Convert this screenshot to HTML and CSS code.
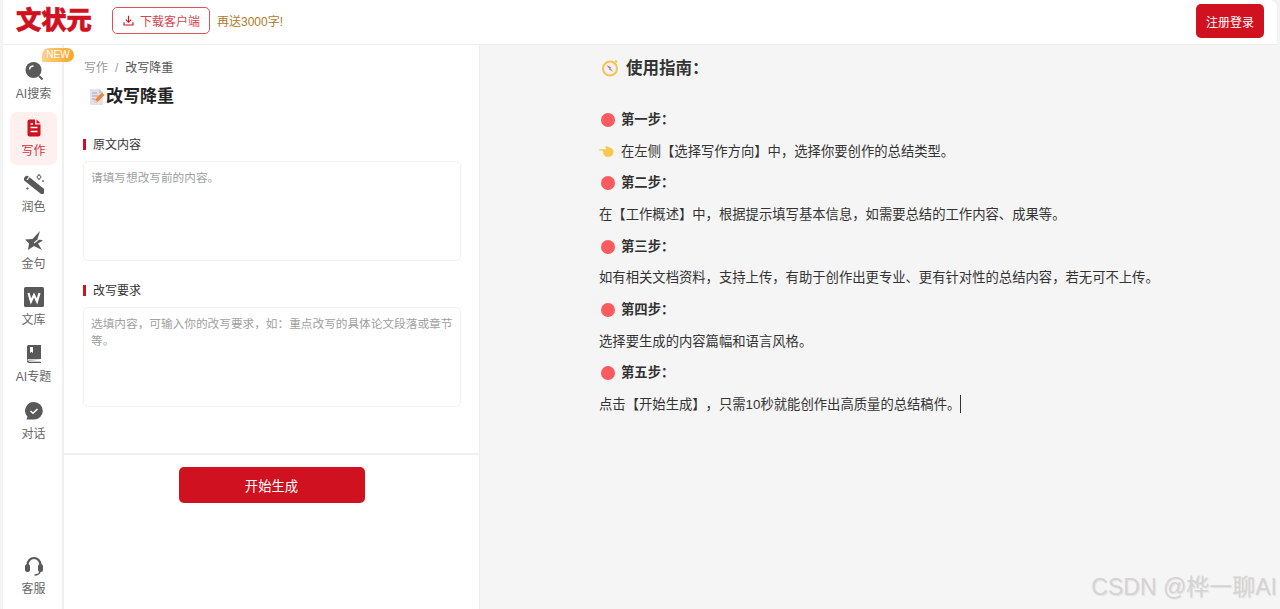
FILE: index.html
```html
<!DOCTYPE html>
<html lang="zh">
<head>
<meta charset="utf-8">
<title>文状元</title>
<link rel="stylesheet" href="styles.css">
</head>
<body>
<div class="app">
  <header class="topbar">
    <div class="logo">文状元</div>
    <button class="download">
      <svg class="dl-icon" viewBox="0 0 16 16"><path d="M8 2v8M4.800 7 8 10.200 11.200 7M2.500 10v3.500h11V10" fill="none" stroke="#d0111f" stroke-width="1.400"/></svg>
      <span>下载客户端</span>
    </button>
    <span class="promo">再送3000字!</span>
    <button class="login">注册登录</button>
  </header>
  <div class="main">
    <nav class="sidebar">
      <div class="nav-list">
        <a class="nav-item">
          <span class="badge">NEW</span>
          <svg class="nav-icon" viewBox="0 0 20 20"><circle cx="9.500" cy="9" r="8" fill="#595959"/><path d="M5.500 8.500a4 4 0 0 1 4-3.500" fill="none" stroke="#fff" stroke-width="1.500"/><path d="M15 15l3.500 3.500" stroke="#595959" stroke-width="2"/></svg>
          <span>AI搜索</span>
        </a>
        <a class="nav-item active">
          <svg class="nav-icon" viewBox="0 0 20 20"><path d="M3.500 3.500a2 2 0 0 1 2-2H11v5h5.500v10a2 2 0 0 1-2 2h-9a2 2 0 0 1-2-2z" fill="#d0111f"/><path d="M12.500 1.500l4 3.800h-4z" fill="#d0111f"/><path d="M6.500 9.500h7M6.500 13.500h7M6.500 6h2.500" stroke="#fff" stroke-width="1.600"/></svg>
          <span>写作</span>
        </a>
        <a class="nav-item">
          <svg class="nav-icon" viewBox="0 0 20 20"><path d="M3 5 18 17" stroke="#595959" stroke-width="6" stroke-linecap="round"/><path d="M5.500 2.500 3 6" stroke="#fff" stroke-width="1.200"/><path d="M15 .5l2 2.500-2 2.500-2-2.500z" fill="none" stroke="#777" stroke-width="1.200"/><path d="M3.500 13l1.500 1.500-1.500 1.500L2 14.500z" fill="#777"/><circle cx="19" cy="7" r="1" fill="#777"/></svg>
          <span>润色</span>
        </a>
        <a class="nav-item">
          <svg class="nav-icon" viewBox="0 0 20 20"><path d="M16 0 13.500 8 19 9.500 14 12.500 18 19 10 15 4 19 5 12.500 1 8.500 8.500 8z" fill="#595959"/><path d="M17.500 6 10 12" stroke="#fff" stroke-width="1.100"/></svg>
          <span>金句</span>
        </a>
        <a class="nav-item">
          <svg class="nav-icon" viewBox="0 0 20 20"><rect width="20" height="20" rx="1.500" fill="#595959"/><path d="M4.500 6 7 14.500 10 8l3 6.500L15.500 6" fill="none" stroke="#fff" stroke-width="2.200"/></svg>
          <span>文库</span>
        </a>
        <a class="nav-item">
          <svg class="nav-icon" viewBox="0 0 20 20"><path d="M3 2.500A1.500 1.500 0 0 1 4.500 1H17v14H5a2 2 0 0 0-2 1.500z" fill="#595959"/><path d="M3 16.500A2 2 0 0 0 5 19h12v-1.200H5.500a1 1 0 0 1 0-2H17" fill="#595959"/><path d="M6 3h3v6L7.500 7.700 6 9z" fill="#fff"/></svg>
          <span>AI专题</span>
        </a>
        <a class="nav-item">
          <svg class="nav-icon" viewBox="0 0 20 20"><path d="M10 1a8.800 8.800 0 0 1 0 17.600H2.500l1-2.800A8.800 8.800 0 0 1 10 1z" fill="#595959"/><path d="M6.500 10l2.500 2.200L13.500 8" fill="none" stroke="#fff" stroke-width="1.500"/></svg>
          <span>对话</span>
        </a>
      </div>
      <a class="nav-item service">
        <svg class="nav-icon" viewBox="0 0 20 20"><path d="M3.500 9a6.500 7 0 0 1 13 0" fill="none" stroke="#595959" stroke-width="2.200"/><rect x="1" y="8" width="5" height="8" rx="2.500" fill="#595959"/><rect x="14" y="8" width="5" height="8" rx="2.500" fill="#595959"/><path d="M16 15c0 2.500-2.500 4-5.500 4" fill="none" stroke="#595959" stroke-width="1.600"/></svg>
        <span>客服</span>
      </a>
    </nav>
    <section class="form-panel">
      <div class="form-scroll">
        <div class="crumbs"><span class="crumb-muted">写作</span><span class="crumb-sep">/</span><span>改写降重</span></div>
        <h1 class="form-title">
          <svg class="title-icon" viewBox="0 0 18 18"><path d="M2 1h9l4 4v12H2z" fill="#e4e0ea"/><path d="M11 1v4h4z" fill="#c9c4d2"/><path d="M4 5h5M4 8h8M4 11h3" stroke="#a9a3b5" stroke-width="1"/><path d="M6 15l1-3.500 7-7 2.500 2.500-7 7z" fill="#f4843d"/><path d="M6 15l1-3.500 2.500 2.500z" fill="#f9d9a8"/></svg>
          <span>改写降重</span>
        </h1>
        <div class="field first">
          <label class="field-label">原文内容</label>
          <textarea class="field-input" placeholder="请填写想改写前的内容。"></textarea>
        </div>
        <div class="field">
          <label class="field-label">改写要求</label>
          <textarea class="field-input" placeholder="选填内容，可输入你的改写要求，如：重点改写的具体论文段落或章节等。"></textarea>
        </div>
      </div>
      <div class="form-footer">
        <button class="generate">开始生成</button>
      </div>
    </section>
    <section class="guide">
      <h2 class="guide-title">
        <svg class="compass" viewBox="0 0 18 18"><circle cx="9" cy="9.500" r="7" fill="#f4f1ee" stroke="#f6c453" stroke-width="2"/><circle cx="15" cy="2.500" r="1.300" fill="#f6c453"/><path d="M5.500 6 10 8.500 8.500 10z" fill="#e2586b"/><path d="M12.500 13 8 10.500 9.500 9z" fill="#9aa3ad"/></svg>
        <span>使用指南：</span>
      </h2>
      <div class="step first"><i class="dot"></i><strong>第一步：</strong></div>
      <p class="line">
        <svg class="hand" viewBox="0 0 16 13"><path d="M.5 4h7.500L6.500 1.500 8 .5l5 2.500c2 1 2.800 2.500 2.500 4.500-.4 2.500-2 4.500-4.500 4.500H7.500c-1.200 0-1.800-1-1.300-2H5.200c-1-.7-1-1.800-.2-2.400-1-.6-1.100-1.400-.8-1.900H1.500C.3 5.700 0 4.500.5 4z" fill="#f7c84f"/></svg>在左侧【选择写作方向】中，选择你要创作的总结类型。
      </p>
      <div class="step"><i class="dot"></i><strong>第二步：</strong></div>
      <p class="line">在【工作概述】中，根据提示填写基本信息，如需要总结的工作内容、成果等。</p>
      <div class="step"><i class="dot"></i><strong>第三步：</strong></div>
      <p class="line">如有相关文档资料，支持上传，有助于创作出更专业、更有针对性的总结内容，若无可不上传。</p>
      <div class="step"><i class="dot"></i><strong>第四步：</strong></div>
      <p class="line">选择要生成的内容篇幅和语言风格。</p>
      <div class="step"><i class="dot"></i><strong>第五步：</strong></div>
      <p class="line">点击【开始生成】，只需10秒就能创作出高质量的总结稿件。<i class="caret"></i></p>
      <div class="watermark">CSDN @桦一聊AI</div>
    </section>
  </div>
</div>
</body>
</html>
```

FILE: styles.css
```css
* {
  box-sizing: border-box;
  font-kerning: none;
  text-spacing-trim: space-all;
}
html, body { margin: 0; height: 100%; overflow: hidden; }
body {
  background: #f3f3f3;
  font-family: "Liberation Sans", "Noto Sans CJK SC", sans-serif;
  font-size: 13.330px;
  color: #333;
}
.app {
  height: 609px;
  margin-left: 3px;
  display: flex;
  flex-direction: column;
}
.topbar {
  height: 45px;
  flex: none;
  background: #fff;
  border-bottom: 1px solid #ececec;
  border-top-right-radius: 8px;
  margin-right: 3px;
  display: flex;
  align-items: center;
  padding: 0 0 0 13px;
}
.logo {
  width: 76px;
  font-size: 25.300px;
  line-height: 30px;
  font-weight: 900;
  color: #d0111f;
  -webkit-text-stroke: .6px #d0111f;
  margin-top: -5px;
  white-space: nowrap;
  flex: none;
}
.download {
  margin-left: 20px;
  width: 98px;
  height: 27px;
  margin-top: -3px;
  padding: 0;
  border: 1px solid #e0505c;
  border-radius: 5px;
  background: #fff;
  color: #d8434f;
  font: inherit;
  font-size: 12px;
  display: flex;
  align-items: center;
  justify-content: center;
  gap: 5px;
}
.dl-icon { width: 13px; height: 13px; }
.promo { margin-left: 7px; margin-top: -4px; font-size: 12px; color: #b07a2a; }
.login {
  margin-left: auto;
  margin-right: 13px;
  margin-top: -2px;
  width: 68px;
  height: 34px;
  border: 0;
  border-radius: 5px;
  background: #d0111f;
  color: #fff;
  font: inherit;
  font-size: 12px;
}
.main { flex: 1; min-height: 0; display: flex; }
.sidebar {
  width: 61px;
  flex: none;
  background: #fff;
  border-right: 2px solid #f0f0f0;
  display: flex;
  flex-direction: column;
  justify-content: space-between;
  padding: 10px 0 6px;
}
.nav-list { display: flex; flex-direction: column; gap: 3.600px; }
.nav-item {
  position: relative;
  width: 47px;
  height: 53px;
  margin-left: 7px;
  border-radius: 7px;
  display: flex;
  flex-direction: column;
  align-items: center;
  justify-content: flex-start;
  padding-top: 6px;
  color: #666;
  font-size: 12px;
  line-height: 16px;
  white-space: nowrap;
}
.nav-item.active { background: #fdf0ef; color: #d8303e; }
.nav-icon { width: 20px; height: 20px; margin-bottom: 5px; flex: none; }
.badge {
  position: absolute;
  top: -7px;
  right: -17px;
  width: 32px;
  height: 14px;
  line-height: 14px;
  text-align: center;
  font-size: 10px;
  color: #fff;
  background: linear-gradient(90deg, #fdd08a, #fda425);
  border-radius: 8px 8px 8px 0;
  z-index: 1;
}
.form-panel {
  width: 416px;
  flex: none;
  background: #fff;
  display: flex;
  flex-direction: column;
  border-right: 1px solid #ededed;
}
.form-scroll { height: 410px; flex: none; padding: 15px 19px 0 20px; border-bottom: 2px solid #f0f0f0; }
.crumbs { font-size: 12px; line-height: 16px; color: #555; display: flex; gap: 7px; }
.crumb-muted, .crumb-sep { color: #999; }
.form-title {
  margin: 9px 0 0 4px;
  font-size: 17px;
  line-height: 24px;
  font-weight: 700;
  color: #222;
  display: flex;
  align-items: center;
}
.title-icon { width: 18px; height: 18px; flex: none; }
.field { margin-top: 24px; margin-left: -1px; }
.field.first { margin-top: 30px; }
.field-label {
  display: block;
  padding-left: 7px;
  border-left: 3px solid #d0111f;
  height: 11px;
  line-height: 13px;
  font-size: 12px;
  color: #333;
}
.field-input {
  display: block;
  width: 378px;
  height: 100px;
  margin-top: 11px;
  padding: 7px 7px;
  border: 1px solid #f1f1f1;
  border-radius: 5px;
  resize: none;
  outline: 0;
  font: inherit;
  font-size: 11.670px;
  line-height: 17px;
}
.field-input::placeholder { color: #a0a0a0; }
.form-footer { display: flex; justify-content: center; padding-top: 12px; }
.generate {
  width: 186px;
  height: 36px;
  border: 0;
  border-radius: 5px;
  background: #d0111f;
  color: #fff;
  font: inherit;
  font-size: 13.330px;
}
.guide {
  position: relative;
  flex: 1;
  min-width: 0;
  background: #f5f5f5;
  padding: 10px 0 0 119px;
}
.guide-title {
  margin: 0;
  height: 26px;
  font-size: 16.500px;
  line-height: 26px;
  font-weight: 700;
  color: #333;
  display: flex;
  align-items: center;
  gap: 7px;
  padding-left: 2px;
}
.compass { width: 18px; height: 18px; }
.step, .line { height: 20px; line-height: 20px; margin: 0; white-space: nowrap; }
.step { display: flex; align-items: center; margin-top: 11.670px; }
.step.first { margin-top: 29px; }
.line { margin-top: 11.670px; color: #333; }
.step strong { color: #333; }
.dot { width: 14px; height: 14px; margin: 0 6px 0 2px; border-radius: 50%; background: #fb5a5f; flex: none; }
.hand { width: 15px; height: 13px; margin-right: 7px; vertical-align: -2px; }
.caret { display: inline-block; width: 1px; height: 18px; margin-left: 0; background: #333; vertical-align: -4px; }
.watermark {
  position: absolute;
  right: 3px;
  bottom: 8px;
  font-size: 23px;
  line-height: 28px;
  color: #d4d4d4;
  text-shadow: 1px 1px 1px rgba(0,0,0,.08);
}
```
